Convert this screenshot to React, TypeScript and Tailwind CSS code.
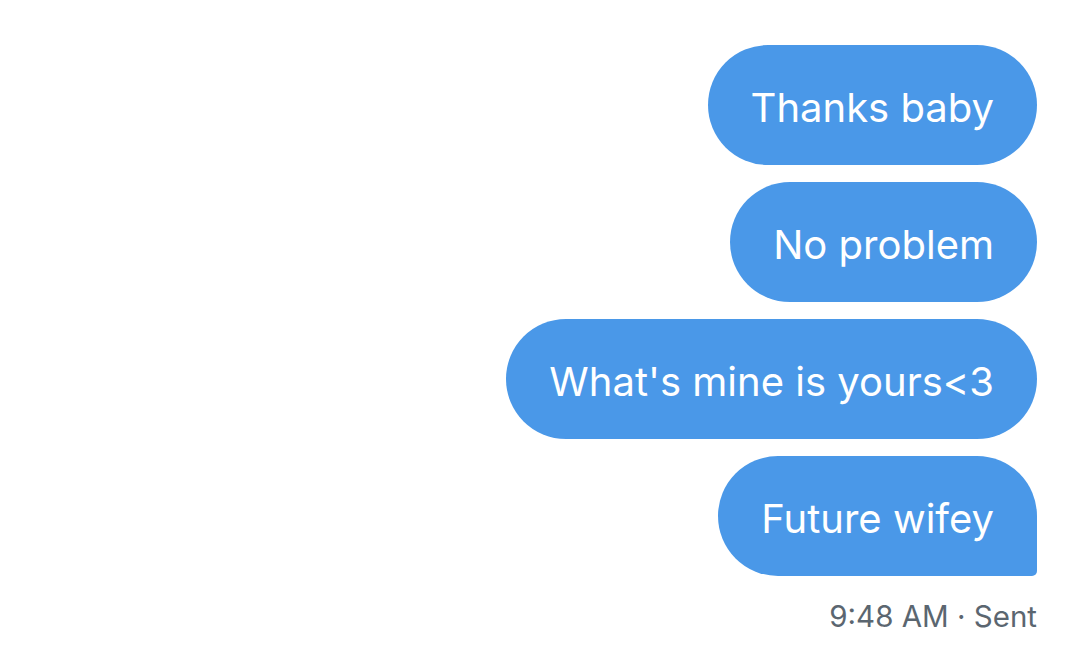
const messages = ["Thanks baby", "No problem", "What's mine is yours<3", "Future wifey"];

export default function App() {
  return (
    <div
      className="w-[1079px] h-[672px] bg-white flex flex-col items-end pt-[45px] pr-[42px]"
      style={{ fontFamily: "Inter, 'Open Sans', sans-serif" }}
    >
      <div className="flex flex-col items-end gap-[17px]">
        {messages.map((m, i) => (
          <div
            key={m}
            className={
              i === messages.length - 1
                ? "h-[120px] flex items-center pt-[5px] px-[43px] bg-[#4a98e8] text-white text-[40px] rounded-[60px] rounded-br-[5px]"
                : "h-[120px] flex items-center pt-[5px] px-[43px] bg-[#4a98e8] text-white text-[40px] rounded-[60px]"
            }
          >
            {m}
          </div>
        ))}
      </div>
      <div className="mt-[26px] text-[29.5px] text-[#5b6670] leading-none">9:48 AM · Sent</div>
    </div>
  );
}
